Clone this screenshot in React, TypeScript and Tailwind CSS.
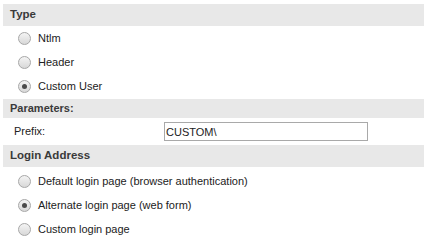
import React from "react";

type Opt = { label: string; checked?: boolean };

const typeOptions: Opt[] = [
  { label: "Ntlm" },
  { label: "Header" },
  { label: "Custom User", checked: true },
];

const loginOptions: Opt[] = [
  { label: "Default login page (browser authentication)" },
  { label: "Alternate login page (web form)", checked: true },
  { label: "Custom login page" },
];

const font = "Tahoma, 'Liberation Sans', Arial, sans-serif";

function Radio({ checked }: { checked?: boolean }) {
  return (
    <span className="flex h-[13px] w-[13px] items-center justify-center rounded-full border border-[#a7a7a7] bg-gradient-to-b from-[#f4f4f4] to-[#d8d8d8]">
      {checked && <span className="h-[5px] w-[5px] rounded-full bg-[#4a4a4a]" />}
    </span>
  );
}

function SectionHeader({ title, cls }: { title: string; cls: string }) {
  return (
    <div className={`flex items-center bg-[#e8e8e8] pl-[7px] font-bold text-[#3a3a3a] ${cls}`}>
      {title}
    </div>
  );
}

function OptionRow({ opt }: { opt: Opt }) {
  return (
    <label className="flex h-[24px] items-center pl-[15px]">
      <Radio checked={opt.checked} />
      <span className="ml-[7px] text-[#222]">{opt.label}</span>
    </label>
  );
}

export default function App() {
  return (
    <div
      className="h-[242px] w-[426px] bg-white pl-[3px] pr-[2px] pt-[4px] text-[11px] leading-none"
      style={{ fontFamily: font }}
    >
      {/* Type */}
      <SectionHeader title="Type" cls="h-[22px] text-[11.5px]" />
      {typeOptions.map((o) => (
        <OptionRow key={o.label} opt={o} />
      ))}

      {/* Parameters */}
      <div className="mt-[1px]">
        <SectionHeader title="Parameters:" cls="h-[19px] text-[11px]" />
      </div>
      <div className="flex h-[27px] items-center pl-[11px]">
        <span className="w-[150px] text-[#222]">Prefix:</span>
        <input
          defaultValue="CUSTOM\"
          className="h-[19px] w-[204px] border border-[#a9a9a9] px-[1px] text-[11px] text-[#222] outline-none"
          style={{ fontFamily: font }}
        />
      </div>

      {/* Login Address */}
      <SectionHeader title="Login Address" cls="h-[22px] text-[11.5px]" />
      <div className="mt-[2px]">
        {loginOptions.map((o) => (
          <OptionRow key={o.label} opt={o} />
        ))}
      </div>
    </div>
  );
}
